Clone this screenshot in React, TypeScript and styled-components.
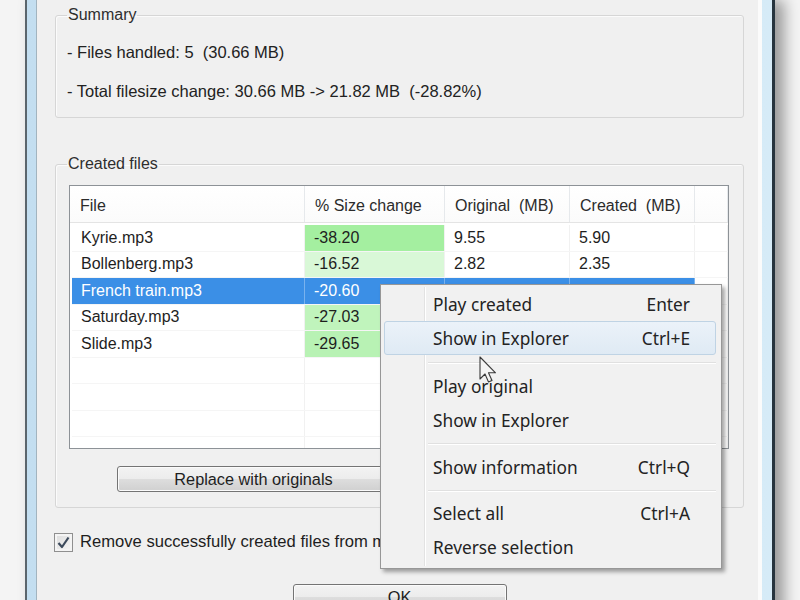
import React from 'react';
import styled, { createGlobalStyle } from 'styled-components';

const Global = createGlobalStyle`
  html, body { margin: 0; padding: 0; background: #f3f3f3; }
  body { width: 800px; height: 600px; overflow: hidden; font-family: "Liberation Sans", Arial, sans-serif; color: #1e1e1e; }
  * { box-sizing: border-box; }
`;

const Screen = styled.div`
  position: relative;
  width: 800px;
  height: 600px;
  overflow: hidden;
  background: #f4f4f4;
  padding-left: 25px;
`;

const Window = styled.div`
  width: 750px;
  height: 660px;
  border-left: 2px solid #5a656c;
  border-right: 3px solid #26343e;
  background: linear-gradient(to right, #c3def0, #d6ebf7);
  padding: 0 10px 0 9px;
  box-shadow: 9px 0 14px rgba(0, 0, 0, 0.38);
`;

const Content = styled.div`
  height: 100%;
  background: #f0f0f0;
  border-left: 1px solid #a2b4bf;
  border-right: 4px solid #fbfbfb;
  padding: 6px 14px 0 18px;
  display: flex;
  flex-direction: column;
`;

const Group = styled.fieldset<{ $top?: number; $pt: number; $pb: number; $pl?: number }>`
  margin: ${(p) => p.$top ?? 0}px 0 0 0;
  border: 1px solid #d6d6d6;
  border-radius: 3px;
  box-shadow: inset 1px 1px 0 #fbfbfb;
  padding: ${(p) => p.$pt}px 14px ${(p) => p.$pb}px ${(p) => p.$pl ?? 11}px;
  min-width: 0;
`;

const Legend = styled.legend<{ $shift?: number }>`
  font-size: 16px;
  line-height: 18px;
  padding: 0 1px;
  margin-left: ${(p) => p.$shift ?? 0}px;
  color: #2e2e2e;
`;

const SummaryLine = styled.div<{ $gap?: number }>`
  font-size: 16.5px;
  line-height: 20px;
  margin-top: ${(p) => p.$gap ?? 0}px;
  color: #222;
  white-space: nowrap;
`;

const List = styled.div`
  height: 264px;
  border: 1px solid #8d9297;
  background: #fff;
  overflow: hidden;
`;

const HeaderRow = styled.div`
  display: grid;
  grid-template-columns: 235px 140px 125px 125px 1fr;
  height: 37px;
  border-bottom: 1px solid #e4e4e4;
  background: linear-gradient(#ffffff, #fbfbfb);
  margin-bottom: 2px;
`;

const HeaderCell = styled.div`
  font-size: 16px;
  display: flex;
  align-items: center;
  padding: 4px 0 0 10px;
  border-right: 1px solid #e6e9ec;
  color: #2b2b2b;
  white-space: nowrap;
`;

const Body = styled.div`
  padding-left: 2px;
`;

const Row = styled.div<{ $selected?: boolean }>`
  display: grid;
  grid-template-columns: 233px 140px 125px 125px 1fr;
  height: 26.5px;
  border-bottom: 1px solid #f5f5f5;
  color: ${(p) => (p.$selected ? '#ffffff' : '#1e1e1e')};
`;

const Cell = styled.div<{ $bg?: string; $selected?: boolean; $last?: boolean }>`
  font-size: 16px;
  display: flex;
  align-items: center;
  padding-left: ${(p) => (p.$last ? 0 : 9)}px;
  white-space: nowrap;
  overflow: hidden;
  background: ${(p) => (p.$selected && !p.$last ? '#3b8fe6' : p.$bg ?? 'transparent')};
  border-right: 1px solid ${(p) => (p.$selected && !p.$last ? '#79b2ee' : '#f1f1f1')};
`;

const ButtonRow = styled.div`
  display: flex;
  margin-top: 17px;
  padding-left: 48px;
`;

const Button = styled.button<{ $w: number }>`
  width: ${(p) => p.$w}px;
  height: 26px;
  border: 1px solid #747474;
  border-radius: 3px;
  background: linear-gradient(#f3f3f3 0%, #ececec 48%, #dddddd 52%, #d0d0d0 100%);
  box-shadow: inset 0 0 0 1px #fbfbfb;
  font-family: "Liberation Sans", Arial, sans-serif;
  font-size: 16.3px;
  color: #1e1e1e;
  padding: 0;
`;

const CheckRow = styled.label`
  display: flex;
  align-items: center;
  gap: 7px;
  margin-top: 24px;
  margin-left: -1px;
  font-size: 16.6px;
  white-space: nowrap;
`;

const CheckBox = styled.span`
  flex: none;
  width: 19px;
  height: 19px;
  border: 1px solid #8f8f8f;
  background: linear-gradient(135deg, #dcdcdc, #f6f6f6);
  box-shadow: inset 0 0 0 2px #f4f4f4;
  display: flex;
  align-items: center;
  justify-content: center;
`;

const OkRow = styled.div`
  display: flex;
  justify-content: center;
  margin-top: 32px;
`;

const Menu = styled.div`
  position: absolute;
  left: 380px;
  top: 284px;
  width: 342px;
  height: 285px;
  background: #f1f1f1;
  border: 1px solid #979797;
  box-shadow: 3px 3px 4px rgba(0, 0, 0, 0.35);
  padding: 2px 5px 3px 3px;
  font-family: "Noto Sans", "Open Sans", sans-serif;
  &::before {
    content: '';
    position: absolute;
    left: 43px;
    top: 2px;
    bottom: 2px;
    width: 1px;
    background: #e2e2e2;
    box-shadow: 1px 0 0 #ffffff;
  }
`;

const MenuItem = styled.div<{ $hover?: boolean }>`
  position: relative;
  height: 34px;
  display: flex;
  align-items: center;
  justify-content: space-between;
  padding: 0 25px 0 48px;
  font-size: 17.3px;
  color: #232323;
  white-space: nowrap;
  border: 1px solid ${(p) => (p.$hover ? '#bfd3e4' : 'transparent')};
  border-radius: 3px;
  background: ${(p) => (p.$hover ? 'linear-gradient(#ebf2f9, #dfeaf4)' : 'transparent')};
`;

const Separator = styled.div<{ $h: number }>`
  height: ${(p) => p.$h}px;
  display: flex;
  align-items: center;
  padding-left: 44px;
  &::after {
    content: '';
    flex: 1;
    height: 1px;
    background: #e0e0e0;
    box-shadow: 0 1px 0 #ffffff;
  }
`;

const Cursor = styled.svg`
  position: absolute;
  left: 479px;
  top: 356px;
`;

type FileRow = { file: string; pct: string; orig: string; created: string; green?: string; selected?: boolean };

const rows: FileRow[] = [
  { file: 'Kyrie.mp3', pct: '-38.20', orig: '9.55', created: '5.90', green: '#a4efa0' },
  { file: 'Bollenberg.mp3', pct: '-16.52', orig: '2.82', created: '2.35', green: '#d9f8d7' },
  { file: 'French train.mp3', pct: '-20.60', orig: '', created: '', selected: true },
  { file: 'Saturday.mp3', pct: '-27.03', orig: '', created: '', green: '#c0f4bc' },
  { file: 'Slide.mp3', pct: '-29.65', orig: '', created: '', green: '#b8f2b4' },
];

const emptyRows = [0, 1, 2, 3];

export default function App() {
  return (
    <>
      <Global />
      <Screen>
        <Window>
          <Content>
            <Group $pt={18} $pb={16}>
              <Legend>Summary</Legend>
              <SummaryLine>- Files handled: 5&nbsp;&nbsp;(30.66 MB)</SummaryLine>
              <SummaryLine $gap={19}>- Total filesize change: 30.66 MB -&gt; 21.82 MB&nbsp;&nbsp;(-28.82%)</SummaryLine>
            </Group>
            <Group $top={37} $pt={12} $pb={15} $pl={13}>
              <Legend $shift={-2}>Created files</Legend>
              <List>
                <HeaderRow>
                  <HeaderCell>File</HeaderCell>
                  <HeaderCell>% Size change</HeaderCell>
                  <HeaderCell>Original&nbsp;&nbsp;(MB)</HeaderCell>
                  <HeaderCell>Created&nbsp;&nbsp;(MB)</HeaderCell>
                  <HeaderCell />
                </HeaderRow>
                <Body>
                  {rows.map((r) => (
                    <Row key={r.file} $selected={r.selected}>
                      <Cell $selected={r.selected}>{r.file}</Cell>
                      <Cell $selected={r.selected} $bg={r.green}>{r.pct}</Cell>
                      <Cell $selected={r.selected}>{r.orig}</Cell>
                      <Cell $selected={r.selected}>{r.created}</Cell>
                      <Cell $selected={r.selected} $last />
                    </Row>
                  ))}
                  {emptyRows.map((i) => (
                    <Row key={'e' + i}>
                      <Cell />
                      <Cell />
                      <Cell />
                      <Cell />
                      <Cell $last />
                    </Row>
                  ))}
                </Body>
              </List>
              <ButtonRow>
                <Button $w={273}>Replace with originals</Button>
              </ButtonRow>
            </Group>
            <CheckRow>
              <CheckBox>
                <svg width="13" height="13" viewBox="0 0 13 13">
                  <path d="M1.5 7 L5 11 L11.5 1.5" fill="none" stroke="#3c4a5c" strokeWidth="2.2" strokeLinejoin="round" />
                </svg>
              </CheckBox>
              Remove successfully created files from main list
            </CheckRow>
            <OkRow>
              <Button $w={214}>OK</Button>
            </OkRow>
          </Content>
        </Window>
        <Menu>
          <MenuItem>
            <span>Play created</span>
            <span>Enter</span>
          </MenuItem>
          <MenuItem $hover>
            <span>Show in Explorer</span>
            <span>Ctrl+E</span>
          </MenuItem>
          <Separator $h={14} />
          <MenuItem>
            <span>Play original</span>
          </MenuItem>
          <MenuItem>
            <span>Show in Explorer</span>
          </MenuItem>
          <Separator $h={13} />
          <MenuItem>
            <span>Show information</span>
            <span>Ctrl+Q</span>
          </MenuItem>
          <Separator $h={12} />
          <MenuItem>
            <span>Select all</span>
            <span>Ctrl+A</span>
          </MenuItem>
          <MenuItem>
            <span>Reverse selection</span>
          </MenuItem>
        </Menu>
        <Cursor width="20" height="30" viewBox="0 0 20 30">
          <path d="M1 1 L1 23 L6 18 L9.5 26 L13 24.5 L9.5 16.8 L16.5 16.8 Z" fill="#f4f4f4" fillOpacity="0.85" stroke="#3a3a3a" strokeWidth="1.1" strokeLinejoin="round" />
        </Cursor>
      </Screen>
    </>
  );
}
